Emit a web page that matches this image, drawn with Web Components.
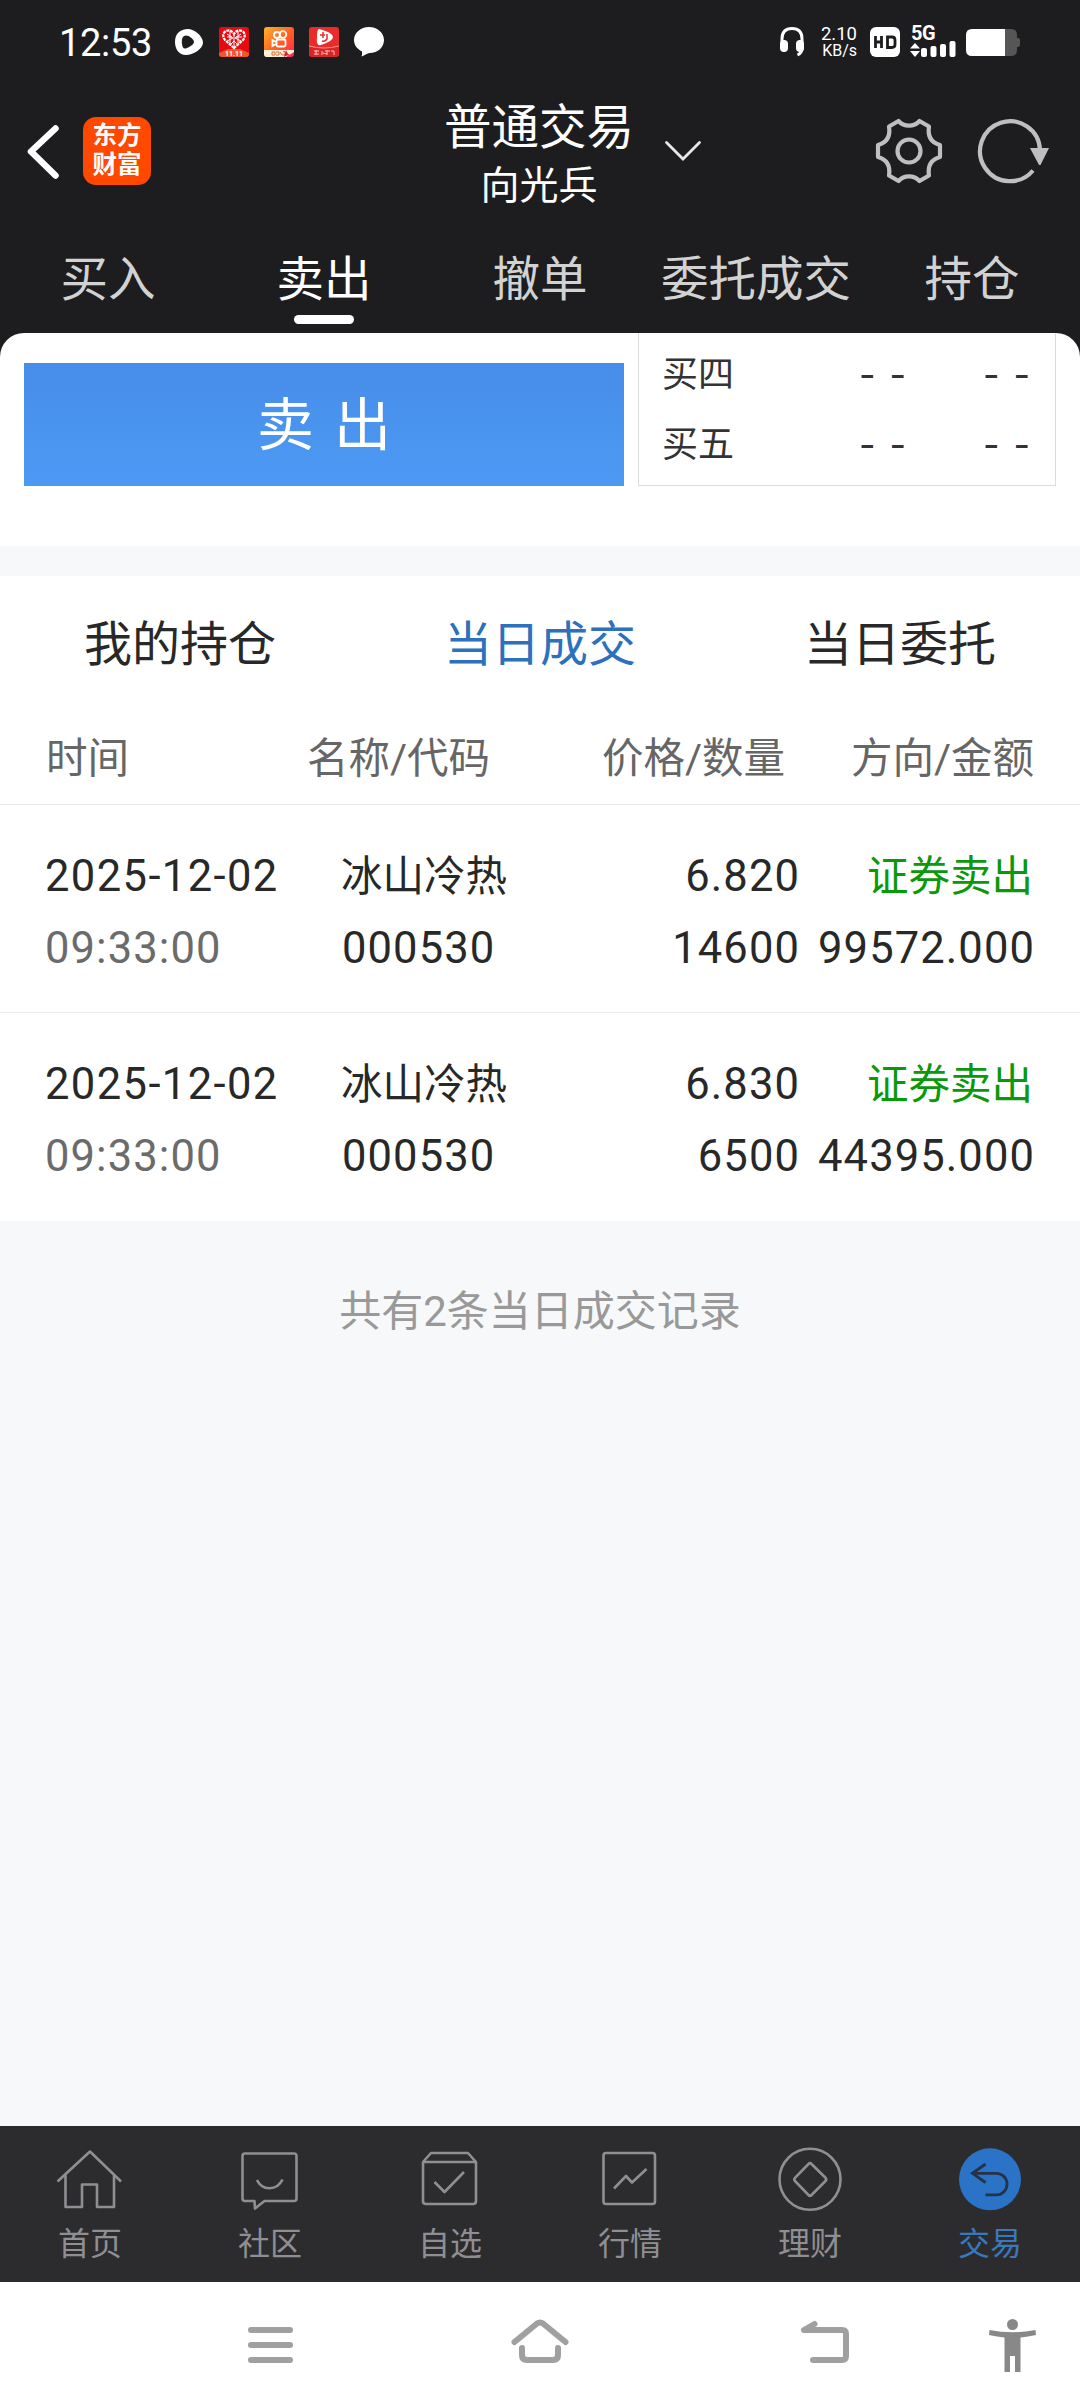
<!DOCTYPE html>
<html lang="zh-CN">
<head>
<meta charset="utf-8">
<title>普通交易</title>
<style>
body{margin:0;background:#1d1d1f}
</style>
</head>
<body>
<trade-app></trade-app>
<script>
function define(tag, css, html){
  const tpl=document.createElement('template');
  tpl.innerHTML='<style>*{box-sizing:border-box}svg{display:block;flex:none}'+css+'</style>'+html;
  customElements.define(tag,class extends HTMLElement{
    constructor(){
      super();
      this.attachShadow({mode:'open'}).appendChild(tpl.content.cloneNode(true));
    }
  });
}

define('status-bar',`
:host{display:flex;height:84px;padding:0 60px 0 59px;align-items:center;color:#fff}
.time{font-size:38px;line-height:40px;width:116px;letter-spacing:-.3px;padding-top:2px;white-space:nowrap}
.left{display:flex;gap:15px;flex:1;align-items:center}
.right{display:flex;align-items:center}
.speed{width:38px;margin:0 13px 0 14px;text-align:right;font-size:18.500px;line-height:17px;white-space:nowrap}
.speed div+div{font-size:16px;line-height:16px}
.net{margin:0 10px 0 10px;display:flex;flex-direction:column;width:46px;height:30px}
.net b{font-size:20px;line-height:13px;height:13px;letter-spacing:-.5px;display:block;margin-left:1px}
`,`
<div class="time">12:53</div>
<div class="left">
<svg width="29" height="30" viewBox="175 27 29 30"><path fill="#fff" fill-rule="evenodd" d="M188 29C194 29 203 36 203 42.500C203 49 193 55 186 55C179 55 175 49 175 42C175 34 180 29 188 29ZM186 35.500C182.500 35.500 181.500 39 182 44C182.500 48 184 49.500 187 48C190.500 46.500 194 44 194 42C194 39 189 35.500 186 35.500Z"/></svg>
<svg width="30" height="30" viewBox="0 0 30 30"><rect width="30" height="30" rx="3" fill="#e60b12"/><path d="M0 26L9 22H21L30 26V27Q30 30 27 30H3Q0 30 0 27Z" fill="#f0582b"/><path d="M15 21L6 13Q2 7 7 4Q12 2 15 7Q18 2 23 4Q28 7 24 13Z" fill="none" stroke="#fff" stroke-width="2.200" stroke-dasharray="3 .8"/><path d="M8 7L14 11L8 14M22 7L16 11L22 14M11 4L11 17M19 4V17M8 10H13M17 10H23M12 17L15 14L18 17M15 8V19" stroke="#fff" stroke-width="1" fill="none"/><text x="15" y="28.500" text-anchor="middle" font-size="7" font-weight="700" fill="#fff" font-family="Roboto">11.11</text></svg>
<svg width="30" height="30" viewBox="0 0 30 30"><defs><linearGradient id="g" x2="1" y2="1"><stop stop-color="#ffb22e"/><stop offset=".5" stop-color="#ff641f"/><stop offset="1" stop-color="#ff2455"/></linearGradient></defs><rect width="30" height="30" rx="3" fill="url(#g)"/><g fill="none" stroke="#fff" stroke-width="1.800"><circle cx="13" cy="8" r="3"/><circle cx="19" cy="7.500" r="3.300"/><rect x="12.500" y="12.500" width="9" height="7" rx="1.500"/><path d="M12 15L8.500 13V19L12 17"/></g><path d="M0 23H30V25L22 30H3Q0 30 0 27Z" fill="#fff1d8"/><path d="M8 25H11V28H8ZM12 25H15V28H12M16 25L18 28M19 24.500H21V28H18" stroke="#e56832" fill="none"/><path d="M22 23L25 29L20 27H26L20 30Z" fill="#c92147"/></svg>
<svg width="30" height="30" viewBox="0 0 30 30"><rect width="30" height="30" rx="3" fill="#e92c29"/><path d="M0 19Q15 24 30 19V27Q30 30 27 30H3Q0 30 0 27Z" fill="#d82528"/><path d="M0 19Q15 23 30 19" stroke="#ff9185" fill="none"/><path d="M10 2Q23 5 24 10Q24 14 12 18Q7 20 8 10Q8 2 10 2Z" fill="#fff"/><path d="M14 5V11M11 8H16M18 7V12Q16 15 13 14" stroke="#e92c29" stroke-width="1.500" fill="none"/><path d="M5 24H10M5 27H10M7 23V28M13 24V28M16 24H21M18 23V28M22 24H25V28M14 26L18 27" stroke="#ffc7bc" stroke-width="1" fill="none"/></svg>
<svg width="30" height="30" viewBox="354 27 30 30"><path fill="#fff" d="M369 27C377.500 27 384 33 384 40C384 47 378 53 369.500 53C366 54 364 55.500 361.500 56.500Q362.500 54 362 51.500C357 49 354 45 354 40C354 33 360.500 27 369 27Z"/></svg>
</div>
<div class="right">
<svg width="25" height="30" viewBox="780 27 25 30"><path d="M782 44V39Q782 28.500 792 28.500Q802 28.500 802 39V48Q802 53 797.500 55" fill="none" stroke="#fff" stroke-width="3"/><rect x="780" y="40" width="8" height="12" rx="4" fill="#fff"/><rect x="796" y="40" width="8" height="12" rx="4" fill="#fff"/></svg>
<div class="speed"><div>2.10</div><div>KB/s</div></div>
<svg width="30" height="30" viewBox="0 0 30 30"><rect width="30" height="30" rx="6" fill="#fff"/><path d="M5.500 9V21M11.500 9V21M5.500 15H11.500M17.500 10H22Q25 10 25 13V17.500Q25 20.500 22 20.500H17.500Z" fill="none" stroke="#1d1d1f" stroke-width="2.800"/></svg>
<div class="net"><b>5G</b><svg width="46" height="17" viewBox="910 40 46 17"><path fill="#fff" d="M910 48.500L915 43L920 48.500ZM910 51H920L915 57Z"/><g fill="#fff"><rect x="921" y="48" width="6" height="9" rx="2"/><rect x="930.500" y="46" width="6" height="11" rx="2"/><rect x="940" y="44" width="6" height="13" rx="2"/><rect x="949.500" y="41" width="6" height="16" rx="2"/></g></svg></div>
<svg width="54" height="28" viewBox="966 30 54 28" style="margin-top:2px"><path d="M1005 30H1011Q1017 30 1017 36V39H1018Q1020 39 1020 41V46Q1020 48 1018 48H1017V51Q1017 57 1011 57H1005Z" fill="#565657"/><path d="M972 30H1005V57H972Q966 57 966 51V36Q966 30 972 30Z" fill="#fff"/></svg>
</div>`);

define('app-logo',`
:host{display:block;width:68px;height:68px;border-radius:13px;background:#ff4800;color:#fff;font:700 24.500px/29px Roboto,"Noto Sans CJK SC",sans-serif;text-align:center;padding:4px 0}
`,`<div>东方</div><div>财富</div>`);

define('trade-header',`
:host{display:grid;grid-template-columns:1fr 192px 1fr;height:136px;padding:0 27px 2px 25px;align-items:center;color:#fff}
.l,.r{display:flex;align-items:center}
.l{gap:22px}
.t{text-align:center;padding-top:6px}
.t div{font-size:47.500px;line-height:64px}
.t div+div{font-size:39px;line-height:52px}
.r svg:first-child{margin:0 172px 0 28px}
.r svg:last-child{margin-left:33px}
`,`
<div class="l"><svg width="36" height="62" viewBox="25 120 36 62"><path d="M55.500 128.500L31 151.500L55.500 175.500" fill="none" stroke="#fff" stroke-width="6.500" stroke-linecap="round" stroke-linejoin="round"/></svg><app-logo></app-logo></div>
<div class="t"><div>普通交易</div><div>向光兵</div></div>
<div class="r">
<svg width="40" height="24" viewBox="664 139 40 24"><path d="M667.500 142.500L684 159L700.500 142.500" fill="none" stroke="#e8e8e8" stroke-width="2.800" stroke-linecap="round"/></svg>
<svg width="68" height="68" viewBox="-34 -34 68 68"><g fill="none" stroke="#bfbfc0" stroke-width="4.200" stroke-linejoin="round"><circle r="11.500"/><path d="M10.500 -30L20 -24.500C18.500 -15 22 -8.500 31 -6V6C22 8.500 18.500 15 20 24.500L10.500 30C5 23.800 -5 23.800 -10.500 30L-20 24.500C-18.500 15 -22 8.500 -31 6V-6C-22 -8.500 -18.500 -15 -20 -24.500L-10.500 -30C-5 -23.800 5 -23.800 10.500 -30Z"/></g></svg>
<svg width="74" height="68" viewBox="977 117 74 68"><path d="M1034 170.500A30 30 0 1 1 1041 150" fill="none" stroke="#bfbfc0" stroke-width="4.200"/><path d="M1031 148H1050L1041.500 165H1040Z" fill="#bfbfc0"/></svg>
</div>`);

define('nav-tabs',`
:host{display:grid;grid-template-columns:repeat(5,1fr);height:113px;color:#d2d2d2;font-size:47.500px;line-height:70px;text-align:center;padding-top:25px}
.on{color:#fff;display:flex;flex-direction:column;align-items:center}
.on:after{content:"";width:60px;height:9px;border-radius:4.500px;background:#fff}
`,`<div>买入</div><div class="on">卖出</div><div>撤单</div><div>委托成交</div><div>持仓</div>`);

define('quote-line',`
:host{display:flex;height:70px;align-items:center;font-size:36px;line-height:40px;color:#333}
span{flex:1}
b{font:400 36px/40px Inter,sans-serif;display:block;width:44px;margin-left:80px;letter-spacing:14px;white-space:nowrap}
`,`<span><slot></slot></span><b>--</b><b>--</b>`);

define('order-panel',`
:host{display:flex;gap:14px;height:213px;padding:0 24px;background:#fff;border-radius:24px 24px 0 0;align-items:flex-start}
.btn{width:600px;height:123px;margin-top:30px;background:linear-gradient(#478dea,#4c9af3);color:#fff;font-size:57px;line-height:126px;text-align:center;word-spacing:6px}
.book{flex:1;height:153px;border:solid #dadbdc;border-width:0 1px 1px;padding:7px 28px 0 23px}
`,`<div class="btn">卖 出</div><div class="book"><quote-line>买四</quote-line><quote-line>买五</quote-line></div>`);

define('record-tabs',`
:host{display:grid;grid-template-columns:repeat(3,1fr);height:134px;text-align:center;font-size:48px;line-height:138px;color:#282828;background:#fff}
.on{color:#2d70bb}
`,`<div>我的持仓</div><div class="on">当日成交</div><div>当日委托</div>`);

define('record-head',`
:host{display:grid;grid-template-columns:261px 261px 217px 1fr;padding:0 46px;height:95px;line-height:97px;font-size:41.500px;color:#666;background:#fff;border-bottom:1px solid #e8e8e8;white-space:nowrap}
.r{text-align:right}
`,`<div>时间</div><div>名称/代码</div><div class="r">价格/数量</div><div class="r">方向/金额</div>`);

define('record-row',`
:host{display:grid;grid-template-columns:296px 228px 231px 1fr;grid-template-rows:72px 72px;padding:36px 45px 0;height:208px;line-height:72px;font-size:43.500px;letter-spacing:1.100px;color:#282828;background:#fff;border-bottom:1px solid #ebebeb;white-space:nowrap}
:host([last]){border-bottom-color:#fff}
.d{letter-spacing:1.400px}
.n{padding-left:1px}
.c{font-size:41.500px;letter-spacing:0}
.r{display:flex;justify-content:flex-end}
.g{color:#6b6b6b}
.s{color:#0a990a;padding-right:2px}
`,`
<div class="d"><slot name="date"></slot></div><div class="c"><slot name="name"></slot></div><div class="r"><slot name="price"></slot></div><div class="r c s"><slot name="side"></slot></div>
<div class="g"><slot name="time"></slot></div><div class="n"><slot name="code"></slot></div><div class="r"><slot name="qty"></slot></div><div class="r"><slot name="sum"></slot></div>`);

define('bottom-tab',`
:host{display:flex;flex-direction:column;align-items:center;padding-top:17px;font-size:32px;line-height:44px;color:#8f8f93}
:host([active]){color:#3a78bd}
::slotted(svg){display:block;margin-bottom:7px;fill:none;stroke:#8f8f93;stroke-width:2.600px;stroke-linejoin:round}
`,`<slot name="icon"></slot><div><slot></slot></div>`);

define('bottom-bar',`
:host{display:grid;grid-template-columns:repeat(6,1fr);height:156px;background:#2c2c2e}
`,`
<bottom-tab><svg slot="icon" width="72" height="72" viewBox="54 2143 72 72"><path d="M57.500 2181.500L90 2151.500L121 2181.500M65.500 2175V2207H82V2184.500H97V2207H114V2175"/></svg>首页</bottom-tab>
<bottom-tab><svg slot="icon" width="72" height="72" viewBox="234 2143 72 72"><path d="M245 2153.500H294Q296.500 2153.500 296.500 2156V2198.500Q296.500 2201 294 2201H264.500L255 2208.500L254.500 2201H245Q242.500 2201 242.500 2198.500V2156Q242.500 2153.500 245 2153.500ZM257 2180C262 2191 277 2191 282.500 2179.500"/></svg>社区</bottom-tab>
<bottom-tab><svg slot="icon" width="72" height="72" viewBox="414 2143 72 72"><path d="M423 2162L431 2153H468L476 2162V2201Q476 2204 473 2204H426Q423 2204 423 2201ZM423 2162H476M434.500 2182L444.500 2192L464 2172"/></svg>自选</bottom-tab>
<bottom-tab><svg slot="icon" width="72" height="72" viewBox="594 2143 72 72"><rect x="603.500" y="2153" width="51.500" height="51" rx="2.500"/><path d="M614 2188.500L626 2176L632 2182.500L646.500 2169"/></svg>行情</bottom-tab>
<bottom-tab><svg slot="icon" width="72" height="72" viewBox="773.500 2143 72 72"><circle cx="809.500" cy="2179.300" r="30.500"/><path d="M808 2164Q809.500 2162.500 811 2164L825 2177.800Q826.500 2179.500 825 2181L811 2195Q809.500 2196.500 808 2195L794.500 2181Q793 2179.500 794.500 2177.800Z"/></svg>理财</bottom-tab>
<bottom-tab active><svg slot="icon" width="72" height="72" viewBox="953.500 2143 72 72"><circle cx="989.500" cy="2179.300" r="31" fill="#2a73c6" stroke="none"/><path d="M985 2164L972 2173.300L985 2182.500M972 2173.300H996A10.500 10.700 0 0 1 996 2194.800H985" stroke="#263347" stroke-width="2.800" stroke-linejoin="miter"/></svg>交易</bottom-tab>`);

define('system-nav',`
:host{display:flex;height:126px;background:#fff;align-items:center;padding-left:246px}
svg{fill:none;stroke:#a0a0a0;stroke-width:6px;stroke-linecap:round;stroke-linejoin:round}
.h{margin-left:217px}.b{margin-left:231px}.p{margin-left:137px;fill:#888;stroke:none}
`,`
<svg width="48" height="60" viewBox="246 2315 48 60"><path d="M251 2330H290M251 2345H290M251 2360H290"/></svg>
<svg class="h" width="58" height="60" viewBox="511 2315 58 60"><path d="M514.500 2342L537 2323.500Q540 2321.500 543 2323.500L565.500 2342M522 2348V2355Q522 2360 527 2360H553Q558 2360 558 2355V2348"/></svg>
<svg class="b" width="50" height="60" viewBox="800 2315 50 60"><path d="M814.500 2324L804 2330H842Q846 2330 846 2334V2356Q846 2360 842 2360H813"/></svg>
<svg class="p" width="52" height="60" viewBox="987 2315 52 60"><circle cx="1012.500" cy="2324.500" r="5.500"/><path d="M989.500 2330Q1012.500 2334.500 1035.500 2330L1036 2335Q1028 2336.800 1020.500 2337.500V2372H1015V2356H1010V2372H1004.500V2337.500Q997 2336.800 989 2335Z"/></svg>`);

define('trade-app',`
:host{display:flex;flex-direction:column;width:1080px;height:2408px;background:#1d1d1f;font-family:Roboto,"Noto Sans CJK SC",sans-serif;overflow:hidden}
.gap{height:30px;background:#f6f8fa}
main{flex:1;background:#f6f8fa;text-align:center;color:#999;font-size:42px;line-height:60px;padding-top:61px}
`,`
<status-bar></status-bar>
<trade-header></trade-header>
<nav-tabs></nav-tabs>
<order-panel></order-panel>
<div class="gap"></div>
<record-tabs></record-tabs>
<record-head></record-head>
<record-row><span slot="date">2025-12-02</span><span slot="time">09:33:00</span><span slot="name">冰山冷热</span><span slot="code">000530</span><span slot="price">6.820</span><span slot="qty">14600</span><span slot="side">证券卖出</span><span slot="sum">99572.000</span></record-row>
<record-row last><span slot="date">2025-12-02</span><span slot="time">09:33:00</span><span slot="name">冰山冷热</span><span slot="code">000530</span><span slot="price">6.830</span><span slot="qty">6500</span><span slot="side">证券卖出</span><span slot="sum">44395.000</span></record-row>
<main>共有2条当日成交记录</main>
<bottom-bar></bottom-bar>
<system-nav></system-nav>`);
</script>
</body>
</html>
